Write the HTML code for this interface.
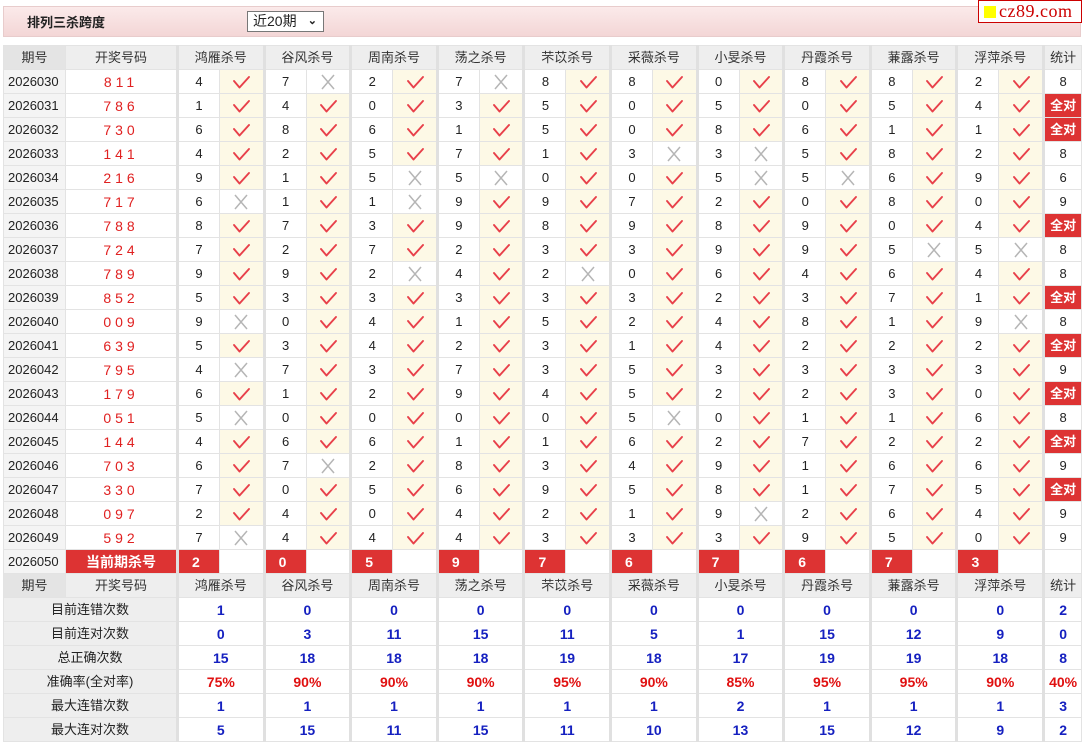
<!DOCTYPE html>
<html><head><meta charset="utf-8"><style>
body{margin:0;background:#fff;font-family:"Liberation Sans","Noto Sans CJK SC",sans-serif;font-size:13px;color:#222;width:1084px;height:742px;overflow:hidden;position:relative}
.bar{position:absolute;left:3px;top:6px;width:1076px;height:29px;background:linear-gradient(#fbeaea,#f3d6d6);border:1px solid #e8cccc}
.bar b{position:absolute;left:23px;top:5px;font-size:13px}
.sel{position:absolute;left:243px;top:4px;border:1px solid #777;background:#fff;font-size:14px;line-height:19px;padding-left:5px;box-sizing:border-box;width:77px;height:21px}
.sel span{position:absolute;right:6px;top:0;font-size:11px;font-weight:bold}
.logo{position:absolute;left:978px;top:0;width:102px;height:21px;border:1px solid #c00;background:#fff;font-family:"Liberation Serif",serif;font-size:18px;color:#c00;line-height:20px;letter-spacing:0.5px;white-space:nowrap;overflow:hidden}
.logo i{display:inline-block;width:12px;height:12px;background:#ff0;margin:0 3px 0 5px;vertical-align:-1px}
table{position:absolute;left:3px;top:45px;border-collapse:collapse;table-layout:fixed;width:1078px}
td{height:23px;line-height:18px;border:1px solid #e3e3e3;text-align:center;padding:0;white-space:nowrap;overflow:hidden}
tr{height:24px}
tr.h td{background:#eee;color:#333;font-size:13px}
tr.h td.q{background:#e4e4e4}
td.p{background:#f4f4f4;text-align:left;padding-left:4px}
td.r{color:#e02020;letter-spacing:4px;font-size:14px}
td.n{border-left:3px solid #e0e0e0}
td.y{background:#fdf9e6}
td.t{border-left:3px solid #e0e0e0}
td.a{background:#d33;color:#fff;font-weight:bold}
td.k{background:#d33;color:#fff;font-weight:bold;text-align:left;padding-left:13px;font-size:14px}
td.cur{background:#d33;color:#fff;font-weight:bold;font-size:14px}
td.l{background:#eee;font-size:13px}
td.b{color:#1520c0;font-weight:bold;font-size:14px}
td.pr{color:#e01010;font-weight:bold;font-size:14px}
svg{display:block;margin:auto;width:20px;height:16px}
</style></head><body>
<svg width="0" height="0" style="position:absolute"><defs>
<symbol id="v" viewBox="0 0 20 16"><path d="M3 7 L8.5 13.5 L18 3" fill="none" stroke="#e8404a" stroke-width="1.9" stroke-linejoin="round" stroke-linecap="round"/></symbol>
<symbol id="x" viewBox="0 0 20 16"><path d="M4 1 L16 15 M16 1 L4 15" fill="none" stroke="#b5b5b5" stroke-width="1.5"/></symbol>
</defs></svg>
<div class="bar"><b>排列三杀跨度</b><div class="sel">近20期<span>&#8964;</span></div></div>
<div class="logo"><i></i>cz89.com</div>
<table>
<colgroup><col style="width:62px"><col style="width:112px"><col style="width:42px"><col style="width:44.6px"><col style="width:42px"><col style="width:44.6px"><col style="width:42px"><col style="width:44.6px"><col style="width:42px"><col style="width:44.6px"><col style="width:42px"><col style="width:44.6px"><col style="width:42px"><col style="width:44.6px"><col style="width:42px"><col style="width:44.6px"><col style="width:42px"><col style="width:44.6px"><col style="width:42px"><col style="width:44.6px"><col style="width:42px"><col style="width:44.6px"><col style="width:38px"></colgroup>
<tr class="h"><td class="q">期号</td><td>开奖号码</td><td class="n" colspan="2">鸿雁杀号</td><td class="n" colspan="2">谷风杀号</td><td class="n" colspan="2">周南杀号</td><td class="n" colspan="2">荡之杀号</td><td class="n" colspan="2">芣苡杀号</td><td class="n" colspan="2">采薇杀号</td><td class="n" colspan="2">小旻杀号</td><td class="n" colspan="2">丹霞杀号</td><td class="n" colspan="2">蒹露杀号</td><td class="n" colspan="2">浮萍杀号</td><td class="t">统计</td></tr>
<tr><td class="p">2026030</td><td class="r">811</td><td class="n">4</td><td class="y"><svg><use href="#v"/></svg></td><td class="n">7</td><td><svg><use href="#x"/></svg></td><td class="n">2</td><td class="y"><svg><use href="#v"/></svg></td><td class="n">7</td><td><svg><use href="#x"/></svg></td><td class="n">8</td><td class="y"><svg><use href="#v"/></svg></td><td class="n">8</td><td class="y"><svg><use href="#v"/></svg></td><td class="n">0</td><td class="y"><svg><use href="#v"/></svg></td><td class="n">8</td><td class="y"><svg><use href="#v"/></svg></td><td class="n">8</td><td class="y"><svg><use href="#v"/></svg></td><td class="n">2</td><td class="y"><svg><use href="#v"/></svg></td><td class="t">8</td></tr>
<tr><td class="p">2026031</td><td class="r">786</td><td class="n">1</td><td class="y"><svg><use href="#v"/></svg></td><td class="n">4</td><td class="y"><svg><use href="#v"/></svg></td><td class="n">0</td><td class="y"><svg><use href="#v"/></svg></td><td class="n">3</td><td class="y"><svg><use href="#v"/></svg></td><td class="n">5</td><td class="y"><svg><use href="#v"/></svg></td><td class="n">0</td><td class="y"><svg><use href="#v"/></svg></td><td class="n">5</td><td class="y"><svg><use href="#v"/></svg></td><td class="n">0</td><td class="y"><svg><use href="#v"/></svg></td><td class="n">5</td><td class="y"><svg><use href="#v"/></svg></td><td class="n">4</td><td class="y"><svg><use href="#v"/></svg></td><td class="t a">全对</td></tr>
<tr><td class="p">2026032</td><td class="r">730</td><td class="n">6</td><td class="y"><svg><use href="#v"/></svg></td><td class="n">8</td><td class="y"><svg><use href="#v"/></svg></td><td class="n">6</td><td class="y"><svg><use href="#v"/></svg></td><td class="n">1</td><td class="y"><svg><use href="#v"/></svg></td><td class="n">5</td><td class="y"><svg><use href="#v"/></svg></td><td class="n">0</td><td class="y"><svg><use href="#v"/></svg></td><td class="n">8</td><td class="y"><svg><use href="#v"/></svg></td><td class="n">6</td><td class="y"><svg><use href="#v"/></svg></td><td class="n">1</td><td class="y"><svg><use href="#v"/></svg></td><td class="n">1</td><td class="y"><svg><use href="#v"/></svg></td><td class="t a">全对</td></tr>
<tr><td class="p">2026033</td><td class="r">141</td><td class="n">4</td><td class="y"><svg><use href="#v"/></svg></td><td class="n">2</td><td class="y"><svg><use href="#v"/></svg></td><td class="n">5</td><td class="y"><svg><use href="#v"/></svg></td><td class="n">7</td><td class="y"><svg><use href="#v"/></svg></td><td class="n">1</td><td class="y"><svg><use href="#v"/></svg></td><td class="n">3</td><td><svg><use href="#x"/></svg></td><td class="n">3</td><td><svg><use href="#x"/></svg></td><td class="n">5</td><td class="y"><svg><use href="#v"/></svg></td><td class="n">8</td><td class="y"><svg><use href="#v"/></svg></td><td class="n">2</td><td class="y"><svg><use href="#v"/></svg></td><td class="t">8</td></tr>
<tr><td class="p">2026034</td><td class="r">216</td><td class="n">9</td><td class="y"><svg><use href="#v"/></svg></td><td class="n">1</td><td class="y"><svg><use href="#v"/></svg></td><td class="n">5</td><td><svg><use href="#x"/></svg></td><td class="n">5</td><td><svg><use href="#x"/></svg></td><td class="n">0</td><td class="y"><svg><use href="#v"/></svg></td><td class="n">0</td><td class="y"><svg><use href="#v"/></svg></td><td class="n">5</td><td><svg><use href="#x"/></svg></td><td class="n">5</td><td><svg><use href="#x"/></svg></td><td class="n">6</td><td class="y"><svg><use href="#v"/></svg></td><td class="n">9</td><td class="y"><svg><use href="#v"/></svg></td><td class="t">6</td></tr>
<tr><td class="p">2026035</td><td class="r">717</td><td class="n">6</td><td><svg><use href="#x"/></svg></td><td class="n">1</td><td class="y"><svg><use href="#v"/></svg></td><td class="n">1</td><td><svg><use href="#x"/></svg></td><td class="n">9</td><td class="y"><svg><use href="#v"/></svg></td><td class="n">9</td><td class="y"><svg><use href="#v"/></svg></td><td class="n">7</td><td class="y"><svg><use href="#v"/></svg></td><td class="n">2</td><td class="y"><svg><use href="#v"/></svg></td><td class="n">0</td><td class="y"><svg><use href="#v"/></svg></td><td class="n">8</td><td class="y"><svg><use href="#v"/></svg></td><td class="n">0</td><td class="y"><svg><use href="#v"/></svg></td><td class="t">9</td></tr>
<tr><td class="p">2026036</td><td class="r">788</td><td class="n">8</td><td class="y"><svg><use href="#v"/></svg></td><td class="n">7</td><td class="y"><svg><use href="#v"/></svg></td><td class="n">3</td><td class="y"><svg><use href="#v"/></svg></td><td class="n">9</td><td class="y"><svg><use href="#v"/></svg></td><td class="n">8</td><td class="y"><svg><use href="#v"/></svg></td><td class="n">9</td><td class="y"><svg><use href="#v"/></svg></td><td class="n">8</td><td class="y"><svg><use href="#v"/></svg></td><td class="n">9</td><td class="y"><svg><use href="#v"/></svg></td><td class="n">0</td><td class="y"><svg><use href="#v"/></svg></td><td class="n">4</td><td class="y"><svg><use href="#v"/></svg></td><td class="t a">全对</td></tr>
<tr><td class="p">2026037</td><td class="r">724</td><td class="n">7</td><td class="y"><svg><use href="#v"/></svg></td><td class="n">2</td><td class="y"><svg><use href="#v"/></svg></td><td class="n">7</td><td class="y"><svg><use href="#v"/></svg></td><td class="n">2</td><td class="y"><svg><use href="#v"/></svg></td><td class="n">3</td><td class="y"><svg><use href="#v"/></svg></td><td class="n">3</td><td class="y"><svg><use href="#v"/></svg></td><td class="n">9</td><td class="y"><svg><use href="#v"/></svg></td><td class="n">9</td><td class="y"><svg><use href="#v"/></svg></td><td class="n">5</td><td><svg><use href="#x"/></svg></td><td class="n">5</td><td><svg><use href="#x"/></svg></td><td class="t">8</td></tr>
<tr><td class="p">2026038</td><td class="r">789</td><td class="n">9</td><td class="y"><svg><use href="#v"/></svg></td><td class="n">9</td><td class="y"><svg><use href="#v"/></svg></td><td class="n">2</td><td><svg><use href="#x"/></svg></td><td class="n">4</td><td class="y"><svg><use href="#v"/></svg></td><td class="n">2</td><td><svg><use href="#x"/></svg></td><td class="n">0</td><td class="y"><svg><use href="#v"/></svg></td><td class="n">6</td><td class="y"><svg><use href="#v"/></svg></td><td class="n">4</td><td class="y"><svg><use href="#v"/></svg></td><td class="n">6</td><td class="y"><svg><use href="#v"/></svg></td><td class="n">4</td><td class="y"><svg><use href="#v"/></svg></td><td class="t">8</td></tr>
<tr><td class="p">2026039</td><td class="r">852</td><td class="n">5</td><td class="y"><svg><use href="#v"/></svg></td><td class="n">3</td><td class="y"><svg><use href="#v"/></svg></td><td class="n">3</td><td class="y"><svg><use href="#v"/></svg></td><td class="n">3</td><td class="y"><svg><use href="#v"/></svg></td><td class="n">3</td><td class="y"><svg><use href="#v"/></svg></td><td class="n">3</td><td class="y"><svg><use href="#v"/></svg></td><td class="n">2</td><td class="y"><svg><use href="#v"/></svg></td><td class="n">3</td><td class="y"><svg><use href="#v"/></svg></td><td class="n">7</td><td class="y"><svg><use href="#v"/></svg></td><td class="n">1</td><td class="y"><svg><use href="#v"/></svg></td><td class="t a">全对</td></tr>
<tr><td class="p">2026040</td><td class="r">009</td><td class="n">9</td><td><svg><use href="#x"/></svg></td><td class="n">0</td><td class="y"><svg><use href="#v"/></svg></td><td class="n">4</td><td class="y"><svg><use href="#v"/></svg></td><td class="n">1</td><td class="y"><svg><use href="#v"/></svg></td><td class="n">5</td><td class="y"><svg><use href="#v"/></svg></td><td class="n">2</td><td class="y"><svg><use href="#v"/></svg></td><td class="n">4</td><td class="y"><svg><use href="#v"/></svg></td><td class="n">8</td><td class="y"><svg><use href="#v"/></svg></td><td class="n">1</td><td class="y"><svg><use href="#v"/></svg></td><td class="n">9</td><td><svg><use href="#x"/></svg></td><td class="t">8</td></tr>
<tr><td class="p">2026041</td><td class="r">639</td><td class="n">5</td><td class="y"><svg><use href="#v"/></svg></td><td class="n">3</td><td class="y"><svg><use href="#v"/></svg></td><td class="n">4</td><td class="y"><svg><use href="#v"/></svg></td><td class="n">2</td><td class="y"><svg><use href="#v"/></svg></td><td class="n">3</td><td class="y"><svg><use href="#v"/></svg></td><td class="n">1</td><td class="y"><svg><use href="#v"/></svg></td><td class="n">4</td><td class="y"><svg><use href="#v"/></svg></td><td class="n">2</td><td class="y"><svg><use href="#v"/></svg></td><td class="n">2</td><td class="y"><svg><use href="#v"/></svg></td><td class="n">2</td><td class="y"><svg><use href="#v"/></svg></td><td class="t a">全对</td></tr>
<tr><td class="p">2026042</td><td class="r">795</td><td class="n">4</td><td><svg><use href="#x"/></svg></td><td class="n">7</td><td class="y"><svg><use href="#v"/></svg></td><td class="n">3</td><td class="y"><svg><use href="#v"/></svg></td><td class="n">7</td><td class="y"><svg><use href="#v"/></svg></td><td class="n">3</td><td class="y"><svg><use href="#v"/></svg></td><td class="n">5</td><td class="y"><svg><use href="#v"/></svg></td><td class="n">3</td><td class="y"><svg><use href="#v"/></svg></td><td class="n">3</td><td class="y"><svg><use href="#v"/></svg></td><td class="n">3</td><td class="y"><svg><use href="#v"/></svg></td><td class="n">3</td><td class="y"><svg><use href="#v"/></svg></td><td class="t">9</td></tr>
<tr><td class="p">2026043</td><td class="r">179</td><td class="n">6</td><td class="y"><svg><use href="#v"/></svg></td><td class="n">1</td><td class="y"><svg><use href="#v"/></svg></td><td class="n">2</td><td class="y"><svg><use href="#v"/></svg></td><td class="n">9</td><td class="y"><svg><use href="#v"/></svg></td><td class="n">4</td><td class="y"><svg><use href="#v"/></svg></td><td class="n">5</td><td class="y"><svg><use href="#v"/></svg></td><td class="n">2</td><td class="y"><svg><use href="#v"/></svg></td><td class="n">2</td><td class="y"><svg><use href="#v"/></svg></td><td class="n">3</td><td class="y"><svg><use href="#v"/></svg></td><td class="n">0</td><td class="y"><svg><use href="#v"/></svg></td><td class="t a">全对</td></tr>
<tr><td class="p">2026044</td><td class="r">051</td><td class="n">5</td><td><svg><use href="#x"/></svg></td><td class="n">0</td><td class="y"><svg><use href="#v"/></svg></td><td class="n">0</td><td class="y"><svg><use href="#v"/></svg></td><td class="n">0</td><td class="y"><svg><use href="#v"/></svg></td><td class="n">0</td><td class="y"><svg><use href="#v"/></svg></td><td class="n">5</td><td><svg><use href="#x"/></svg></td><td class="n">0</td><td class="y"><svg><use href="#v"/></svg></td><td class="n">1</td><td class="y"><svg><use href="#v"/></svg></td><td class="n">1</td><td class="y"><svg><use href="#v"/></svg></td><td class="n">6</td><td class="y"><svg><use href="#v"/></svg></td><td class="t">8</td></tr>
<tr><td class="p">2026045</td><td class="r">144</td><td class="n">4</td><td class="y"><svg><use href="#v"/></svg></td><td class="n">6</td><td class="y"><svg><use href="#v"/></svg></td><td class="n">6</td><td class="y"><svg><use href="#v"/></svg></td><td class="n">1</td><td class="y"><svg><use href="#v"/></svg></td><td class="n">1</td><td class="y"><svg><use href="#v"/></svg></td><td class="n">6</td><td class="y"><svg><use href="#v"/></svg></td><td class="n">2</td><td class="y"><svg><use href="#v"/></svg></td><td class="n">7</td><td class="y"><svg><use href="#v"/></svg></td><td class="n">2</td><td class="y"><svg><use href="#v"/></svg></td><td class="n">2</td><td class="y"><svg><use href="#v"/></svg></td><td class="t a">全对</td></tr>
<tr><td class="p">2026046</td><td class="r">703</td><td class="n">6</td><td class="y"><svg><use href="#v"/></svg></td><td class="n">7</td><td><svg><use href="#x"/></svg></td><td class="n">2</td><td class="y"><svg><use href="#v"/></svg></td><td class="n">8</td><td class="y"><svg><use href="#v"/></svg></td><td class="n">3</td><td class="y"><svg><use href="#v"/></svg></td><td class="n">4</td><td class="y"><svg><use href="#v"/></svg></td><td class="n">9</td><td class="y"><svg><use href="#v"/></svg></td><td class="n">1</td><td class="y"><svg><use href="#v"/></svg></td><td class="n">6</td><td class="y"><svg><use href="#v"/></svg></td><td class="n">6</td><td class="y"><svg><use href="#v"/></svg></td><td class="t">9</td></tr>
<tr><td class="p">2026047</td><td class="r">330</td><td class="n">7</td><td class="y"><svg><use href="#v"/></svg></td><td class="n">0</td><td class="y"><svg><use href="#v"/></svg></td><td class="n">5</td><td class="y"><svg><use href="#v"/></svg></td><td class="n">6</td><td class="y"><svg><use href="#v"/></svg></td><td class="n">9</td><td class="y"><svg><use href="#v"/></svg></td><td class="n">5</td><td class="y"><svg><use href="#v"/></svg></td><td class="n">8</td><td class="y"><svg><use href="#v"/></svg></td><td class="n">1</td><td class="y"><svg><use href="#v"/></svg></td><td class="n">7</td><td class="y"><svg><use href="#v"/></svg></td><td class="n">5</td><td class="y"><svg><use href="#v"/></svg></td><td class="t a">全对</td></tr>
<tr><td class="p">2026048</td><td class="r">097</td><td class="n">2</td><td class="y"><svg><use href="#v"/></svg></td><td class="n">4</td><td class="y"><svg><use href="#v"/></svg></td><td class="n">0</td><td class="y"><svg><use href="#v"/></svg></td><td class="n">4</td><td class="y"><svg><use href="#v"/></svg></td><td class="n">2</td><td class="y"><svg><use href="#v"/></svg></td><td class="n">1</td><td class="y"><svg><use href="#v"/></svg></td><td class="n">9</td><td><svg><use href="#x"/></svg></td><td class="n">2</td><td class="y"><svg><use href="#v"/></svg></td><td class="n">6</td><td class="y"><svg><use href="#v"/></svg></td><td class="n">4</td><td class="y"><svg><use href="#v"/></svg></td><td class="t">9</td></tr>
<tr><td class="p">2026049</td><td class="r">592</td><td class="n">7</td><td><svg><use href="#x"/></svg></td><td class="n">4</td><td class="y"><svg><use href="#v"/></svg></td><td class="n">4</td><td class="y"><svg><use href="#v"/></svg></td><td class="n">4</td><td class="y"><svg><use href="#v"/></svg></td><td class="n">3</td><td class="y"><svg><use href="#v"/></svg></td><td class="n">3</td><td class="y"><svg><use href="#v"/></svg></td><td class="n">3</td><td class="y"><svg><use href="#v"/></svg></td><td class="n">9</td><td class="y"><svg><use href="#v"/></svg></td><td class="n">5</td><td class="y"><svg><use href="#v"/></svg></td><td class="n">0</td><td class="y"><svg><use href="#v"/></svg></td><td class="t">9</td></tr>
<tr><td class="p">2026050</td><td class="cur">当前期杀号</td><td class="n k">2</td><td></td><td class="n k">0</td><td></td><td class="n k">5</td><td></td><td class="n k">9</td><td></td><td class="n k">7</td><td></td><td class="n k">6</td><td></td><td class="n k">7</td><td></td><td class="n k">6</td><td></td><td class="n k">7</td><td></td><td class="n k">3</td><td></td><td class="t"></td></tr>
<tr class="h"><td class="q">期号</td><td>开奖号码</td><td class="n" colspan="2">鸿雁杀号</td><td class="n" colspan="2">谷风杀号</td><td class="n" colspan="2">周南杀号</td><td class="n" colspan="2">荡之杀号</td><td class="n" colspan="2">芣苡杀号</td><td class="n" colspan="2">采薇杀号</td><td class="n" colspan="2">小旻杀号</td><td class="n" colspan="2">丹霞杀号</td><td class="n" colspan="2">蒹露杀号</td><td class="n" colspan="2">浮萍杀号</td><td class="t">统计</td></tr>
<tr><td class="l" colspan="2">目前连错次数</td><td class="n b" colspan="2">1</td><td class="n b" colspan="2">0</td><td class="n b" colspan="2">0</td><td class="n b" colspan="2">0</td><td class="n b" colspan="2">0</td><td class="n b" colspan="2">0</td><td class="n b" colspan="2">0</td><td class="n b" colspan="2">0</td><td class="n b" colspan="2">0</td><td class="n b" colspan="2">0</td><td class="t b">2</td></tr>
<tr><td class="l" colspan="2">目前连对次数</td><td class="n b" colspan="2">0</td><td class="n b" colspan="2">3</td><td class="n b" colspan="2">11</td><td class="n b" colspan="2">15</td><td class="n b" colspan="2">11</td><td class="n b" colspan="2">5</td><td class="n b" colspan="2">1</td><td class="n b" colspan="2">15</td><td class="n b" colspan="2">12</td><td class="n b" colspan="2">9</td><td class="t b">0</td></tr>
<tr><td class="l" colspan="2">总正确次数</td><td class="n b" colspan="2">15</td><td class="n b" colspan="2">18</td><td class="n b" colspan="2">18</td><td class="n b" colspan="2">18</td><td class="n b" colspan="2">19</td><td class="n b" colspan="2">18</td><td class="n b" colspan="2">17</td><td class="n b" colspan="2">19</td><td class="n b" colspan="2">19</td><td class="n b" colspan="2">18</td><td class="t b">8</td></tr>
<tr><td class="l" colspan="2">准确率(全对率)</td><td class="n pr" colspan="2">75%</td><td class="n pr" colspan="2">90%</td><td class="n pr" colspan="2">90%</td><td class="n pr" colspan="2">90%</td><td class="n pr" colspan="2">95%</td><td class="n pr" colspan="2">90%</td><td class="n pr" colspan="2">85%</td><td class="n pr" colspan="2">95%</td><td class="n pr" colspan="2">95%</td><td class="n pr" colspan="2">90%</td><td class="t pr">40%</td></tr>
<tr><td class="l" colspan="2">最大连错次数</td><td class="n b" colspan="2">1</td><td class="n b" colspan="2">1</td><td class="n b" colspan="2">1</td><td class="n b" colspan="2">1</td><td class="n b" colspan="2">1</td><td class="n b" colspan="2">1</td><td class="n b" colspan="2">2</td><td class="n b" colspan="2">1</td><td class="n b" colspan="2">1</td><td class="n b" colspan="2">1</td><td class="t b">3</td></tr>
<tr><td class="l" colspan="2">最大连对次数</td><td class="n b" colspan="2">5</td><td class="n b" colspan="2">15</td><td class="n b" colspan="2">11</td><td class="n b" colspan="2">15</td><td class="n b" colspan="2">11</td><td class="n b" colspan="2">10</td><td class="n b" colspan="2">13</td><td class="n b" colspan="2">15</td><td class="n b" colspan="2">12</td><td class="n b" colspan="2">9</td><td class="t b">2</td></tr>
</table>
</body></html>
